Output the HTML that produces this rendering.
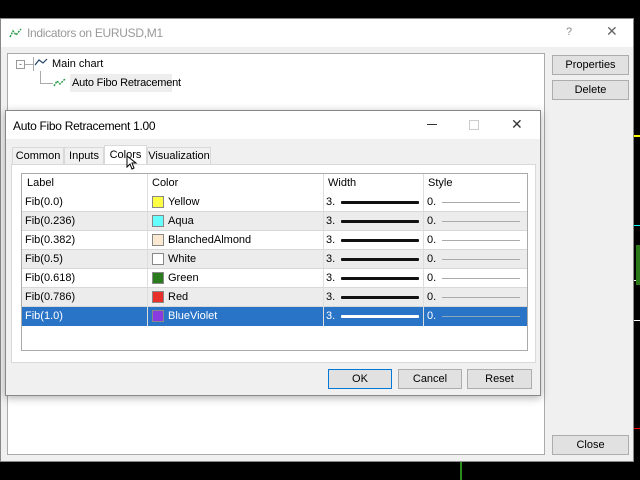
<!DOCTYPE html>
<html><head><style>
*{box-sizing:border-box;margin:0;padding:0}
body{width:640px;height:480px;background:#000;position:relative;overflow:hidden;font-family:"Liberation Sans",sans-serif;font-size:11px;color:#000}
.abs{position:absolute}
.btn{position:absolute;background:#e1e1e1;border:1px solid #adadad;text-align:center;font-size:11px;line-height:18px}
.row{position:absolute;left:0;width:505px;height:19px;border-bottom:1px solid #d8d8d8}
.row div{position:absolute;top:0;line-height:18px;height:18px}
.row div.sw{position:absolute;top:3px;width:12px;height:12px;border:1px solid #888}
.wl{position:absolute;top:8px;left:15px;width:78px;height:3px;background:#111;border-radius:1px}
.sl{position:absolute;top:9px;left:15px;width:78px;height:1px;background:#aaa}
</style></head><body>
<div class="abs" style="left:634px;top:135px;width:6px;height:2px;background:#ff0"></div>
<div class="abs" style="left:634px;top:225px;width:6px;height:1px;background:#0ff"></div>
<div class="abs" style="left:634px;top:280px;width:6px;height:1px;background:#fff"></div>
<div class="abs" style="left:634px;top:320px;width:6px;height:1px;background:#fff"></div>
<div class="abs" style="left:636px;top:245px;width:4px;height:40px;background:#2a7a1a"></div>
<div class="abs" style="left:634px;top:428px;width:6px;height:1px;background:#f00"></div>
<div class="abs" style="left:460px;top:462px;width:2px;height:18px;background:#2a8a1a"></div>
<div class="abs" style="left:0;top:18px;width:634px;height:444px;background:#f0f0f0;border:1px solid #888">
 <div class="abs" style="left:0;top:0;width:632px;height:28px;background:#fff"></div>
 <svg class="abs" style="left:8px;top:8px" width="14" height="12"><path d="M1 10 L4 4 L7 8 L12 2" stroke="#2a9a4a" stroke-width="1.5" fill="none" stroke-dasharray="2 1"/></svg>
 <div class="abs" style="left:26px;top:7px;font-size:12px;letter-spacing:-0.3px;color:#999">Indicators on EURUSD,M1</div>
 <div class="abs" style="left:565px;top:7px;font-size:11px;color:#888">?</div>
 <div class="abs" style="left:605px;top:4px;font-size:14px;color:#666">✕</div>
 <div class="abs" style="left:6px;top:34px;width:538px;height:402px;background:#fff;border:1px solid #aaa"></div>
 <div class="abs" style="left:15px;top:41px;width:9px;height:9px;border:1px solid #999;font-size:9px;line-height:6px;text-align:center;color:#555">-</div>
 <div class="abs" style="left:24px;top:45px;width:8px;height:1px;background:#aaa"></div>
 <div class="abs" style="left:32px;top:38px;width:1px;height:14px;background:#aaa"></div>
 <svg class="abs" style="left:33px;top:38px" width="14" height="10"><path d="M1 8 L5 3 L9 6 L13 2" stroke="#246" stroke-width="1.2" fill="none"/></svg>
 <div class="abs" style="left:51px;top:39px;font-size:11px">Main chart</div>
 <div class="abs" style="left:39px;top:52px;width:1px;height:12px;background:#aaa"></div>
 <div class="abs" style="left:39px;top:64px;width:13px;height:1px;background:#aaa"></div>
 <svg class="abs" style="left:52px;top:58px" width="14" height="11"><path d="M1 9 L4 4 L7 7 L12 2" stroke="#2a9a4a" stroke-width="1.5" fill="none" stroke-dasharray="2 1"/></svg>
 <div class="abs" style="left:69px;top:55px;width:102px;height:18px;background:#eee"></div>
 <div class="abs" style="left:71px;top:58px;font-size:11px;letter-spacing:-0.2px">Auto Fibo Retracement</div>
 <div class="btn" style="left:551px;top:36px;width:77px;height:20px">Properties</div>
 <div class="btn" style="left:551px;top:61px;width:77px;height:20px">Delete</div>
 <div class="btn" style="left:551px;top:416px;width:77px;height:20px">Close</div>
</div>
<div class="abs" style="left:5px;top:110px;width:536px;height:286px;background:#f0f0f0;border:1px solid #888;box-shadow:0 2px 8px rgba(0,0,0,.3)">
 <div class="abs" style="left:0;top:0;width:534px;height:28px;background:#fff"></div>
 <div class="abs" style="left:7px;top:8px;font-size:12px;letter-spacing:-0.3px">Auto Fibo Retracement 1.00</div>
 <div class="abs" style="left:421px;top:13px;width:10px;height:1px;background:#333"></div>
 <div class="abs" style="left:463px;top:9px;width:10px;height:10px;border:1px solid #ccc"></div>
 <div class="abs" style="left:505px;top:5px;font-size:14px;color:#333">✕</div>
 <div class="abs" style="left:6px;top:36px;width:52px;height:18px;border:1px solid #d9d9d9;background:#f0f0f0;text-align:center;line-height:17px">Common</div>
 <div class="abs" style="left:58px;top:36px;width:40px;height:18px;border:1px solid #d9d9d9;background:#f0f0f0;text-align:center;line-height:17px">Inputs</div>
 <div class="abs" style="left:98px;top:34px;width:43px;height:20px;border:1px solid #d9d9d9;border-bottom:none;background:#fff;text-align:center;line-height:19px">Colors</div>
 <div class="abs" style="left:141px;top:36px;width:64px;height:18px;border:1px solid #d9d9d9;background:#f0f0f0;text-align:center;line-height:17px">Visualization</div>
 <div class="abs" style="left:5px;top:53px;width:525px;height:199px;background:#fff;border:1px solid #d9d9d9"></div>
 <svg class="abs" style="left:120px;top:44px" width="12" height="16"><path d="M1 1 L1 12 L4 9 L6 14 L8 13 L6 8 L10 8 Z" fill="#fff" stroke="#000" stroke-width="1"/></svg>
 <div class="abs" style="left:15px;top:62px;width:507px;height:178px;background:#fff;border:1px solid #aaa">
  <div class="row" style="top:0;border:none"><div style="left:5px">Label</div><div style="left:130px">Color</div><div style="left:306px">Width</div><div style="left:406px">Style</div></div>
  <div class="row" style="top:19px;background:#fff"><div style="left:3px">Fib(0.0)</div><div class="sw" style="left:130px;background:#ff4"></div><div style="left:146px">Yellow</div><div style="left:304px;width:100px">3.<span class="wl"></span></div><div style="left:405px;width:100px">0.<span class="sl"></span></div></div>
  <div class="row" style="top:38px;background:#ececec"><div style="left:3px">Fib(0.236)</div><div class="sw" style="left:130px;background:#6ff"></div><div style="left:146px">Aqua</div><div style="left:304px;width:100px">3.<span class="wl"></span></div><div style="left:405px;width:100px">0.<span class="sl"></span></div></div>
  <div class="row" style="top:57px;background:#fff"><div style="left:3px">Fib(0.382)</div><div class="sw" style="left:130px;background:#fbe9d2"></div><div style="left:146px">BlanchedAlmond</div><div style="left:304px;width:100px">3.<span class="wl"></span></div><div style="left:405px;width:100px">0.<span class="sl"></span></div></div>
  <div class="row" style="top:76px;background:#ececec"><div style="left:3px">Fib(0.5)</div><div class="sw" style="left:130px;background:#fff"></div><div style="left:146px">White</div><div style="left:304px;width:100px">3.<span class="wl"></span></div><div style="left:405px;width:100px">0.<span class="sl"></span></div></div>
  <div class="row" style="top:95px;background:#fff"><div style="left:3px">Fib(0.618)</div><div class="sw" style="left:130px;background:#2a7a1e"></div><div style="left:146px">Green</div><div style="left:304px;width:100px">3.<span class="wl"></span></div><div style="left:405px;width:100px">0.<span class="sl"></span></div></div>
  <div class="row" style="top:114px;background:#ececec"><div style="left:3px">Fib(0.786)</div><div class="sw" style="left:130px;background:#e8302a"></div><div style="left:146px">Red</div><div style="left:304px;width:100px">3.<span class="wl"></span></div><div style="left:405px;width:100px">0.<span class="sl"></span></div></div>
  <div class="row" style="top:133px;background:#2a74c8;color:#fff;border:none"><div style="left:3px">Fib(1.0)</div><div class="sw" style="left:130px;background:#8a3be0"></div><div style="left:146px">BlueViolet</div><div style="left:304px;width:100px">3.<span class="wl" style="background:#fff"></span></div><div style="left:405px;width:100px">0.<span class="sl" style="background:#8ab"></span></div></div>
  <div class="abs" style="left:125px;top:0;width:1px;height:152px;background:#ddd"></div>
  <div class="abs" style="left:301px;top:0;width:1px;height:152px;background:#ddd"></div>
  <div class="abs" style="left:401px;top:0;width:1px;height:152px;background:#ddd"></div>
 </div>
 <div class="btn" style="left:322px;top:258px;width:64px;height:20px;border-color:#0078d7">OK</div>
 <div class="btn" style="left:392px;top:258px;width:64px;height:20px">Cancel</div>
 <div class="btn" style="left:461px;top:258px;width:65px;height:20px">Reset</div>
</div>
</body></html>
